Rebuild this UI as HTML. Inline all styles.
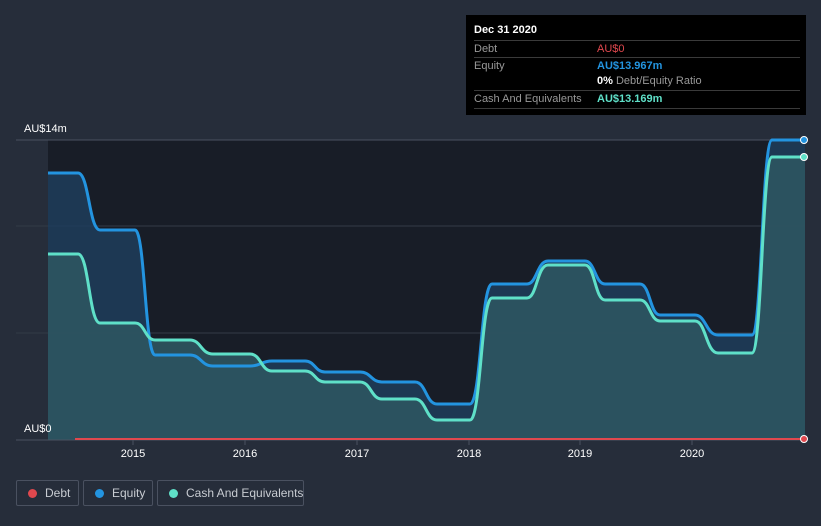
<!DOCTYPE html>
<html><head><meta charset="utf-8"><style>
html,body{margin:0;width:821px;height:526px;overflow:hidden}
body{background:#262d3a;font-family:"Liberation Sans",sans-serif;position:relative}
.tt{position:absolute;left:466px;top:15px;width:340px;height:100px;background:#000;color:#fff;font-size:11px}
.tt .r{position:absolute;left:8px;right:6px;border-top:1px solid #3a3a3a;height:17px;line-height:17px}
.lg{position:absolute;top:480px;height:26px;border:1px solid #4a5160;border-radius:2px;color:#c8ccd2;font-size:12px;line-height:24px;box-sizing:border-box;white-space:nowrap;overflow:hidden}
.lg i{position:absolute;left:11px;top:8px;width:9px;height:9px;border-radius:50%}
.lg span{position:absolute;left:28px;top:0}
</style></head><body>
<svg width="821" height="526" style="position:absolute;left:0;top:0">
<rect x="48" y="140" width="757" height="300" fill="#181d27"/>
<line x1="16" y1="140" x2="805" y2="140" stroke="#4a5160"/>
<line x1="16" y1="226" x2="805" y2="226" stroke="#333a47"/>
<line x1="16" y1="333" x2="805" y2="333" stroke="#333a47"/>
<path d="M48,440 L48,173 L78,173 C89,173 89,230 100,230 L135,230 C145,230 145,355 155,355 L190,355 C201,355 201,366 213,366 L250,366 C261,366 261,361 272,361 L305,361 C315,361 315,372 325,372 L360,372 C371,372 371,382 382,382 L415,382 C426,382 426,404 437,404 L470,404 C481,404 481,284 492,284 L527,284 C537,284 537,261 548,261 L585,261 C595,261 595,284 605,284 L640,284 C650,284 650,315 660,315 L695,315 C706,315 706,335 718,335 L752,335 C762,335 762,140 772,140 L805,140 L805,440Z" fill="#1f3d5c" opacity="0.85"/>
<path d="M48,440 L48,254 L78,254 C89,254 89,323 100,323 L135,323 C145,323 145,340 155,340 L190,340 C201,340 201,354 213,354 L250,354 C261,354 261,371 272,371 L305,371 C315,371 315,382 325,382 L360,382 C371,382 371,399 382,399 L415,399 C426,399 426,420 437,420 L470,420 C481,420 481,298 492,298 L527,298 C537,298 537,265 548,265 L585,265 C595,265 595,300 605,300 L640,300 C650,300 650,321 660,321 L695,321 C706,321 706,353 718,353 L752,353 C762,353 762,157 772,157 L805,157 L805,440Z" fill="#2e5560" opacity="0.9"/>
<path d="M48,173 L78,173 C89,173 89,230 100,230 L135,230 C145,230 145,355 155,355 L190,355 C201,355 201,366 213,366 L250,366 C261,366 261,361 272,361 L305,361 C315,361 315,372 325,372 L360,372 C371,372 371,382 382,382 L415,382 C426,382 426,404 437,404 L470,404 C481,404 481,284 492,284 L527,284 C537,284 537,261 548,261 L585,261 C595,261 595,284 605,284 L640,284 C650,284 650,315 660,315 L695,315 C706,315 706,335 718,335 L752,335 C762,335 762,140 772,140 L805,140" fill="none" stroke="#2394e0" stroke-width="3"/>
<path d="M48,254 L78,254 C89,254 89,323 100,323 L135,323 C145,323 145,340 155,340 L190,340 C201,340 201,354 213,354 L250,354 C261,354 261,371 272,371 L305,371 C315,371 315,382 325,382 L360,382 C371,382 371,399 382,399 L415,399 C426,399 426,420 437,420 L470,420 C481,420 481,298 492,298 L527,298 C537,298 537,265 548,265 L585,265 C595,265 595,300 605,300 L640,300 C650,300 650,321 660,321 L695,321 C706,321 706,353 718,353 L752,353 C762,353 762,157 772,157 L805,157" fill="none" stroke="#5fe0c8" stroke-width="3"/>
<line x1="16" y1="440" x2="805" y2="440" stroke="#4a5160"/>
<line x1="75" y1="439" x2="805" y2="439" stroke="#e0484e" stroke-width="2"/>
<circle cx="804" cy="140" r="3.5" fill="#2394e0" stroke="#fff"/>
<circle cx="804" cy="157" r="3.5" fill="#5fe0c8" stroke="#fff"/>
<circle cx="804" cy="439" r="3.5" fill="#e0484e" stroke="#fff"/>
<g stroke="#4a5160"><line x1="133" y1="440" x2="133" y2="445"/><line x1="245" y1="440" x2="245" y2="445"/><line x1="357" y1="440" x2="357" y2="445"/><line x1="469" y1="440" x2="469" y2="445"/><line x1="580" y1="440" x2="580" y2="445"/><line x1="692" y1="440" x2="692" y2="445"/></g>
<g fill="#fff" font-size="11" text-anchor="middle"><text x="133" y="457">2015</text><text x="245" y="457">2016</text><text x="357" y="457">2017</text><text x="469" y="457">2018</text><text x="580" y="457">2019</text><text x="692" y="457">2020</text></g>
<text x="24" y="132" fill="#fff" font-size="11">AU$14m</text>
<text x="24" y="432" fill="#fff" font-size="11">AU$0</text>
</svg>
<div class="tt">
<div style="position:absolute;left:8px;top:9px;font-weight:bold">Dec 31 2020</div>
<div class="r" style="top:25px"><span style="color:#999">Debt</span><span style="position:absolute;left:123px;color:#e0484e">AU$0</span></div>
<div class="r" style="top:42px"><span style="color:#999">Equity</span><span style="position:absolute;left:123px;color:#2394e0;font-weight:bold">AU$13.967m</span></div>
<div class="r" style="top:58px;border:none"><span style="position:absolute;left:123px"><b>0%</b> <span style="color:#999">Debt/Equity Ratio</span></span></div>
<div class="r" style="top:75px;border-bottom:1px solid #3a3a3a"><span style="color:#999">Cash And Equivalents</span><span style="position:absolute;left:123px;color:#5fe0c8;font-weight:bold">AU$13.169m</span></div>
</div>
<div class="lg" style="left:16px;width:63px"><i style="background:#e0484e"></i><span>Debt</span></div>
<div class="lg" style="left:83px;width:70px"><i style="background:#2394e0"></i><span>Equity</span></div>
<div class="lg" style="left:157px;width:147px"><i style="background:#5fe0c8"></i><span>Cash And Equivalents</span></div>
</body></html>
